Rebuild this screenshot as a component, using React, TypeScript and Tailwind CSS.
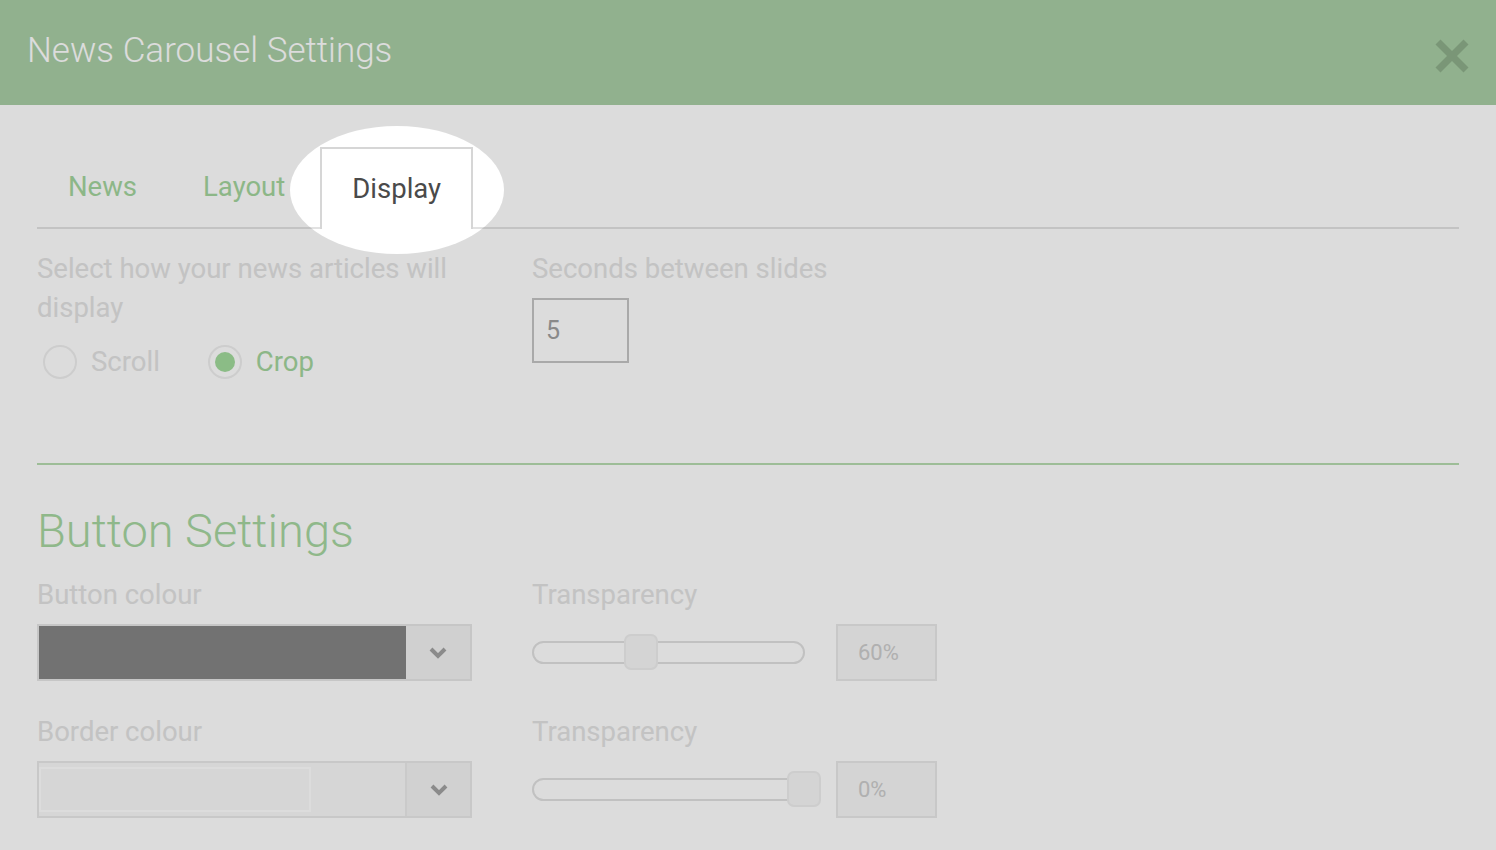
import React from 'react'

const Chevron = () => (
  <svg width="20" height="14" viewBox="0 0 20 14">
    <polyline points="3,3 10,10 17,3" fill="none" stroke="#a2a2a2" strokeWidth="4" />
  </svg>
)

const Slider = ({ thumb }: { thumb: number }) => (
  <div className="relative h-[57px] w-[290px] flex items-center">
    <div className="h-[23px] w-[273px] rounded-full border-2 border-[#e0e0e0] bg-white" />
    <div
      className="absolute top-[10px] h-[36px] w-[34px] rounded-[7px] border-2 border-[#eeeeee] bg-[#f6f6f6]"
      style={{ left: thumb }}
    />
  </div>
)

const ValueBox = ({ value }: { value: string }) => (
  <div className="flex h-[57px] w-[101px] items-center border-2 border-[#e8e8e8] bg-[#f6f6f6] pl-[20px] text-[22px] text-[#cccccc]">
    {value}
  </div>
)

const App = () => {
  return (
    <div className="relative h-[850px] w-[1496px] overflow-hidden bg-white font-['Roboto','Liberation_Sans',sans-serif]">
      {/* Header */}
      <div className="flex h-[105px] items-center justify-between bg-[#a9cea5] pl-[27px] pr-[26px]">
        <h1 className="-mt-[2px] text-[35px] font-light text-white">News Carousel Settings</h1>
        <svg width="36" height="36" viewBox="0 0 36 36" className="mt-[6px]">
          <line x1="4" y1="4" x2="32" y2="32" stroke="#8eae8a" strokeWidth="7" />
          <line x1="32" y1="4" x2="4" y2="32" stroke="#8eae8a" strokeWidth="7" />
        </svg>
      </div>

      <div className="px-[37px]">
        {/* Tabs */}
        <div className="mt-[42px] flex gap-1 border-b-2 border-[#e2e2e2]">
          <div className="flex h-[80px] items-center px-[31px] text-[27.5px] text-[#a3d49d]">News</div>
          <div className="flex h-[80px] items-center px-[31px] text-[27.5px] text-[#a3d49d]">Layout</div>
          <div className="relative -mb-[2px] flex h-[82px] items-center border-2 border-b-0 border-[#d6d6d6] bg-white px-[30px] text-[27.5px] text-[#4a4a4a]">
            Display
            {/* spotlight */}
            <div className="pointer-events-none absolute left-[-32px] top-[-23px] z-50 h-[128px] w-[214px] rounded-[50%] shadow-[0_0_0_3000px_rgba(0,0,0,0.137)]" />
          </div>
        </div>

        {/* Display options */}
        <div className="grid grid-cols-[495px_1fr]">
          <div className="pt-[20px]">
            <p className="w-[440px] text-[27.5px] leading-[39px] text-[#e2e2e2]">
              Select how your news articles will display
            </p>
            <div className="mt-[14px] flex items-center text-[27.5px]">
              <span className="ml-[6px] h-[34px] w-[34px] rounded-full border-2 border-[#eeeeee] bg-white" />
              <span className="ml-[14px] text-[#e2e2e2]">Scroll</span>
              <span className="ml-[48px] flex h-[34px] w-[34px] items-center justify-center rounded-full border-2 border-[#eeeeee] bg-white">
                <span className="h-[20px] w-[20px] rounded-full bg-[#a2da9c]" />
              </span>
              <span className="ml-[14px] text-[#a3d49d]">Crop</span>
            </div>
          </div>
          <div className="pt-[20px]">
            <p className="text-[27.5px] leading-[39px] text-[#e2e2e2]">Seconds between slides</p>
            <div className="mt-[10px] flex h-[65px] w-[97px] items-center border-2 border-[#c4c4c4] pl-[12px] text-[25px] text-[#a0a0a0]">
              5
            </div>
          </div>
        </div>

        <div className="mt-[81px] border-t-2 border-[#b6dcb0]" />

        <h2 className="mt-[40px] text-[47px] font-light leading-[52px] text-[#a6d6a0]">Button Settings</h2>

        {/* Button settings */}
        <div className="mt-[18px] grid grid-cols-[495px_1fr] gap-y-[31px]">
          <div>
            <p className="text-[27.5px] leading-[39px] text-[#e2e2e2]">Button colour</p>
            <div className="mt-[10px] flex h-[57px] w-[435px] border-2 border-[#e6e6e6]">
              <div className="w-[367px] bg-[#858585]" />
              <div className="flex flex-1 items-center justify-center bg-[#f2f2f2]">
                <Chevron />
              </div>
            </div>
          </div>
          <div>
            <p className="text-[27.5px] leading-[39px] text-[#e2e2e2]">Transparency</p>
            <div className="mt-[10px] flex items-center gap-[14px]">
              <Slider thumb={92} />
              <ValueBox value="60%" />
            </div>
          </div>
          <div>
            <p className="text-[27.5px] leading-[39px] text-[#e2e2e2]">Border colour</p>
            <div className="mt-[10px] flex h-[57px] w-[435px] border-2 border-[#e8e8e8] bg-[#f8f8f8]">
              <div className="flex w-[368px] items-center border-r-2 border-[#eaeaea]">
                <div className="h-[45px] w-[272px] border-2 border-white bg-[#f9f9f9]" />
              </div>
              <div className="flex flex-1 items-center justify-center bg-[#f3f3f3]">
                <Chevron />
              </div>
            </div>
          </div>
          <div>
            <p className="text-[27.5px] leading-[39px] text-[#e2e2e2]">Transparency</p>
            <div className="mt-[10px] flex items-center gap-[14px]">
              <Slider thumb={255} />
              <ValueBox value="0%" />
            </div>
          </div>
        </div>
      </div>
    </div>
  )
}

export default App
